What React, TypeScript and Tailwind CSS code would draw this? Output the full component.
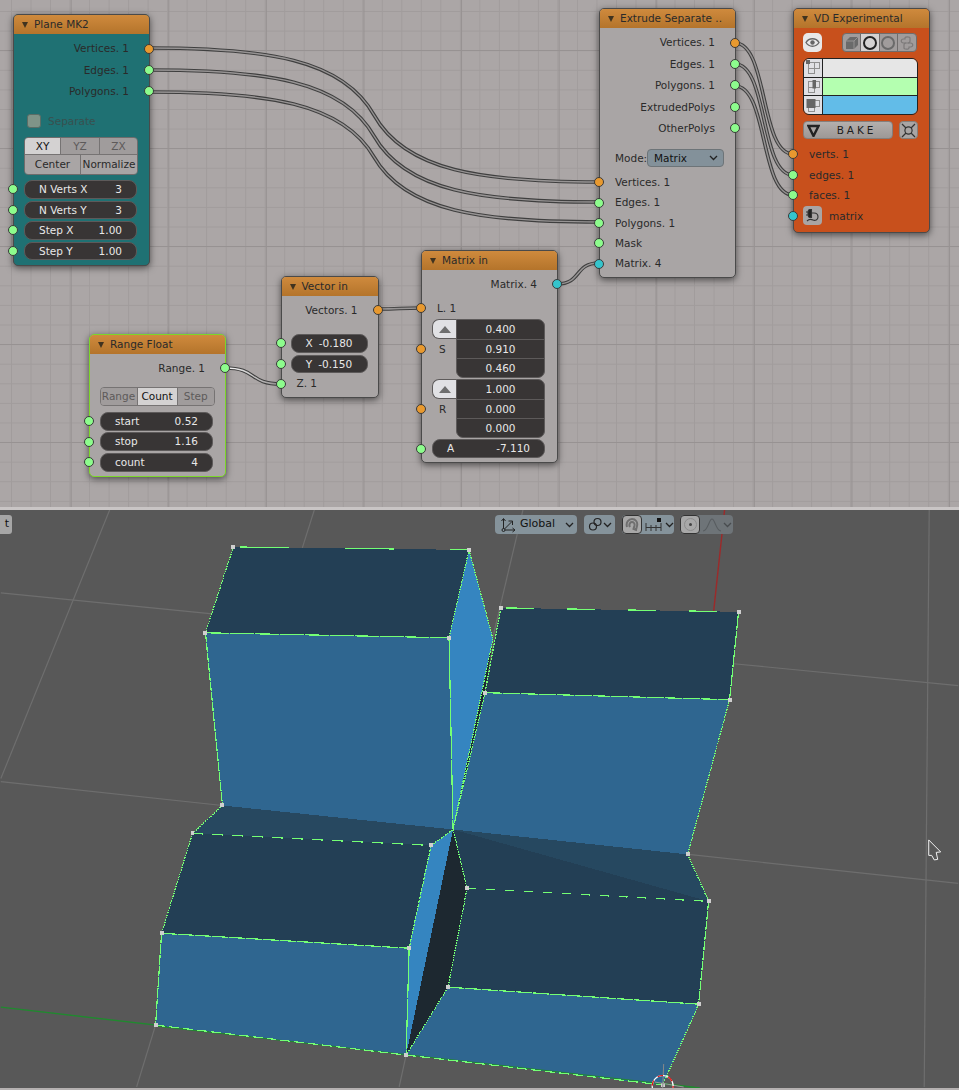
import type { ReactNode } from "react";

const ORANGE = "bg-[#e8992f]";
const GREEN = "bg-[#8dfc8d]";
const CYAN = "bg-[#35c4cc]";

function Socket({ color, side }: { color: string; side: "left" | "right" }) {
  return (
    <span
      className={`absolute top-1/2 z-10 size-[10px] -translate-y-1/2 rounded-full border border-[#3a3a3a] ${color} ${
        side === "left" ? "left-[-6px]" : "right-[-5px]"
      }`}
    />
  );
}

function Node({
  title,
  className,
  body,
  children,
}: {
  title: string;
  className: string;
  body: string;
  children: ReactNode;
}) {
  return (
    <div
      className={`absolute flex w-[137px] flex-col rounded-[5px] border border-[#4a4a4a] text-[10.5px] leading-none text-[#2a2a2a] shadow-[0_2px_7px_rgba(0,0,0,0.55)] ${body} ${className}`}
    >
      <div className="flex h-[19px] shrink-0 items-center gap-[6px] rounded-t-[4px] bg-[linear-gradient(#cf8a3d,#b4742b)] pl-[8px]">
        <span className="mt-[1px] h-0 w-0 border-x-[3.5px] border-t-[6px] border-x-transparent border-t-[#40331f]" />
        <span>{title}</span>
      </div>
      {children}
    </div>
  );
}

function Output({ label, color, h = "h-[21.4px]" }: { label: string; color: string; h?: string }) {
  return (
    <div className={`relative flex items-center justify-end pr-[20px] ${h}`}>
      <span>{label}</span>
      <Socket color={color} side="right" />
    </div>
  );
}

function Input({ label, color, h = "h-[20.4px]" }: { label: string; color: string; h?: string }) {
  return (
    <div className={`relative flex items-center pl-[15px] ${h}`}>
      <span>{label}</span>
      <Socket color={color} side="left" />
    </div>
  );
}

function Field({
  label,
  value,
  h = "h-[18.5px]",
  px = "px-[14px]",
  outer = "pl-[10px] pr-[12px]",
}: {
  label: string;
  value: string;
  h?: string;
  px?: string;
  outer?: string;
}) {
  return (
    <div className={`relative ${outer}`}>
      <div
        className={`flex items-center justify-between rounded-[8px] border border-[#5d5a5a] bg-[#383535] text-[#e8e8e8] ${h} ${px}`}
      >
        <span>{label}</span>
        <span>{value}</span>
      </div>
      <Socket color={GREEN} side="left" />
    </div>
  );
}

function Seg({ label, on, dim, w }: { label: string; on?: boolean; dim?: boolean; w: string }) {
  return (
    <div
      className={`flex h-full items-center justify-center border-r border-[#767373] last:border-r-0 ${w} ${
        on ? "bg-[#d4d2d2] text-[#111]" : dim ? "bg-[#a09c9c] text-[#5d5a5a]" : "bg-[#a9a5a5]"
      }`}
    >
      {label}
    </div>
  );
}

function ArrayField({ values, label, color }: { values: string[]; label: string; color: string }) {
  return (
    <div className="relative flex pl-[10px] pr-[12px]">
      <div className="w-[24px] shrink-0">
        <div className="flex h-[20px] items-center justify-center rounded-l-[7px] border border-r-0 border-[#5d5a5a] bg-[#e1e1e4]">
          <span className="h-0 w-0 border-x-[6px] border-b-[7px] border-x-transparent border-b-[#6e6e6e]" />
        </div>
        <div className="flex h-[20px] items-center pl-[7px]">{label}</div>
      </div>
      <div className="flex flex-1 flex-col rounded-r-[7px] rounded-bl-[7px] border border-[#5d5a5a] bg-[#383535] text-[#e8e8e8]">
        {values.map((v, i) => (
          <div
            key={i}
            className={`flex h-[19px] items-center justify-center ${i > 0 ? "border-t border-[#5d5a5a]" : ""}`}
          >
            {v}
          </div>
        ))}
      </div>
      <Socket color={color} side="left" />
    </div>
  );
}

function Wire({ d, selected }: { d: string; selected?: boolean }) {
  return (
    <g fill="none">
      <path d={d} stroke="#3f3f3f" strokeWidth="3.6" />
      <path d={d} stroke={selected ? "url(#wireSel)" : "#979494"} strokeWidth="1.4" />
    </g>
  );
}

// long links: flat at both ends, steep through the middle
function longLink(x1: number, y1: number, x2: number, y2: number) {
  const dx = x2 - x1;
  const dy = y2 - y1;
  const mx = (x1 + x2) / 2;
  const my = (y1 + y2) / 2;
  const cx = 0.07 * dx;
  const cy = 0.42 * dy;
  return `M${x1} ${y1} C${x1 + 0.26 * dx} ${y1} ${mx - cx} ${my - cy} ${mx} ${my} C${mx + cx} ${my + cy} ${x2 - 0.26 * dx} ${y2} ${x2} ${y2}`;
}

function Wires() {
  return (
    <svg className="absolute inset-0 size-full" viewBox="0 0 959 507">
      <defs>
        <linearGradient id="wireSel" x1="0" x2="1" y1="0" y2="0">
          <stop offset="0" stopColor="#ffffff" />
          <stop offset="1" stopColor="#8f8c8c" />
        </linearGradient>
      </defs>
      <Wire d={longLink(149, 48, 599, 182)} />
      <Wire d={longLink(149, 70, 599, 202)} />
      <Wire d={longLink(149, 92, 599, 222)} />
      <Wire d="M735 43 C768 43 760 154 793 154" />
      <Wire d="M735 64 C768 64 760 175 793 175" />
      <Wire d="M735 86 C768 86 760 195 793 195" />
      <Wire d="M378 309 C400 309 399 308 421 308" />
      <Wire d="M225 368 C258 368 248 384 281 384" selected />
      <Wire d="M557 284 C582 284 574 263 599 263" />
    </svg>
  );
}

function PlaneNode() {
  return (
    <Node title="Plane MK2" className="left-[13px] top-[14px] h-[252px]" body="bg-[#1f7173]">
      <div className="h-[4px]" />
      <Output label="Vertices. 1" color={ORANGE} />
      <Output label="Edges. 1" color={GREEN} />
      <Output label="Polygons. 1" color={GREEN} />
      <div className="mt-[12px] flex h-[14px] items-center gap-[7px] pl-[13px] text-[#38504f]">
        <span className="size-[14px] rounded-[3px] border border-[#5b6d66] bg-[#7f9488]" />
        <span>Separate</span>
      </div>
      <div className="ml-[10px] mr-[11px] mt-[9px] overflow-hidden rounded-[4px] border border-[#6f6c6c]">
        <div className="flex h-[17px] border-b border-[#767373]">
          <Seg label="XY" on w="w-[36px]" />
          <Seg label="YZ" dim w="w-[39px]" />
          <Seg label="ZX" dim w="flex-1" />
        </div>
        <div className="flex h-[19px]">
          <Seg label="Center" w="w-[56px]" />
          <Seg label="Normalize" w="flex-1" />
        </div>
      </div>
      <div className="mt-[5px] flex flex-col gap-[2px]">
        <Field label="N Verts X" value="3" />
        <Field label="N Verts Y" value="3" />
        <Field label="Step X" value="1.00" />
        <Field label="Step Y" value="1.00" />
      </div>
    </Node>
  );
}

function ExtrudeNode() {
  return (
    <Node title="Extrude Separate .." className="left-[599px] top-[8px] h-[270px]" body="bg-[#a9a5a5]">
      <div className="h-[4px]" />
      <Output label="Vertices. 1" color={ORANGE} />
      <Output label="Edges. 1" color={GREEN} />
      <Output label="Polygons. 1" color={GREEN} />
      <Output label="ExtrudedPolys" color={GREEN} />
      <Output label="OtherPolys" color={GREEN} />
      <div className="mt-[10px] flex h-[18px] items-center pl-[15px] pr-[11px]">
        <span className="w-[32px]">Mode:</span>
        <div className="flex h-full flex-1 items-center justify-between rounded-[4px] border border-[#6d7478] bg-[#83919a] pl-[6px] pr-[5px] text-[#111]">
          <span>Matrix</span>
          <Chevron />
        </div>
      </div>
      <div className="mt-[5px]">
        <Input label="Vertices. 1" color={ORANGE} />
        <Input label="Edges. 1" color={GREEN} />
        <Input label="Polygons. 1" color={GREEN} />
        <Input label="Mask" color={GREEN} />
        <Input label="Matrix. 4" color={CYAN} />
      </div>
    </Node>
  );
}

function Chevron({ stroke = "#222" }: { stroke?: string }) {
  return (
    <svg width="9" height="6" viewBox="0 0 9 6" className="shrink-0">
      <path d="M1 1 L4.5 4.5 L8 1" fill="none" stroke={stroke} strokeWidth="1.3" />
    </svg>
  );
}

function VertIcon({ kind }: { kind: "vert" | "edge" | "face" }) {
  return (
    <svg width="16" height="15" viewBox="0 0 16 15">
      <g fill="none" stroke="#8f8f8f" strokeWidth="1">
        <rect x="3.5" y="2.5" width="6" height="6" />
        <rect x="9.5" y="2.5" width="5" height="6" />
        <rect x="3.5" y="8.5" width="6" height="5" />
      </g>
      {kind === "vert" && <rect x="1" y="0" width="4" height="4" fill="#666" />}
      {kind === "edge" && <rect x="7.5" y="1" width="3.5" height="8.5" fill="#666" />}
      {kind === "face" && <rect x="1.5" y="1" width="9" height="9" fill="#666" />}
    </svg>
  );
}

function VdNode() {
  const cell = "flex h-full w-[18.5px] items-center justify-center border-r border-[#6f6c6c] last:border-r-0";
  const snake = "M7 7 H3.5 C0.5 7 0.5 3 3.5 3 H5 V2 C5 0.5 10 0.5 10 2 V5 C10 6.5 9 7 8 7";
  return (
    <Node title="VD Experimental" className="left-[793px] top-[8px] h-[225px]" body="bg-[#c8501c]">
      <div className="mt-[5px] flex h-[19px] justify-between pl-[9px] pr-[12px]">
        <div className="flex w-[19px] items-center justify-center rounded-[5px] bg-[#e8e8e8]">
          <svg width="15" height="11" viewBox="0 0 15 11">
            <path d="M1 5.5 C4 0.5 11 0.5 14 5.5 C11 10.5 4 10.5 1 5.5 Z" fill="none" stroke="#666" strokeWidth="1.4" />
            <circle cx="7.5" cy="5.5" r="2.2" fill="#666" />
          </svg>
        </div>
        <div className="flex w-[75px] overflow-hidden rounded-[4px] border border-[#6f6c6c] bg-[#a09c9c]">
          <div className={cell}>
            <svg width="14" height="14" viewBox="0 0 14 14">
              <path d="M1 5 L5 1 L13 1 L13 9 L9 13 L1 13 Z" fill="#6a6a6a" />
              <path d="M1 5 L9 5 L9 13 M9 5 L13 1" fill="none" stroke="#a09c9c" strokeWidth="0.8" />
            </svg>
          </div>
          <div className={`${cell} bg-[#d4d2d2]`}>
            <span className="size-[14px] rounded-full border-2 border-[#222]" />
          </div>
          <div className={cell}>
            <span className="size-[14px] rounded-full border-2 border-[#6a6a6a]" />
          </div>
          <div className={cell}>
            <svg width="14" height="14" viewBox="0 0 14 14" fill="none" stroke="#7d7a7a" strokeWidth="1.2">
              <path d={snake} />
              <path d={snake} transform="rotate(180 7 7)" />
            </svg>
          </div>
        </div>
      </div>
      <div className="ml-[9px] mr-[11px] mt-[6px] flex h-[57px] flex-col overflow-hidden rounded-[6px] border border-[#222]">
        {[
          ["vert", "bg-[#e6e6e6]"],
          ["edge", "bg-[#b4ffb0]"],
          ["face", "bg-[#62bce8]"],
        ].map(([kind, color], i) => (
          <div key={kind} className={`flex flex-1 ${i > 0 ? "border-t border-[#222]" : ""}`}>
            <div className="flex w-[19px] items-center justify-center border-r border-[#222] bg-[#e0e0e4]">
              <VertIcon kind={kind as "vert" | "edge" | "face"} />
            </div>
            <div className={`flex-1 ${color}`} />
          </div>
        ))}
      </div>
      <div className="mt-[6px] flex h-[18px] gap-[6px] pl-[9px] pr-[11px]">
        <div className="flex flex-1 items-center rounded-[4px] border border-[#857f7c] bg-[linear-gradient(#b3afad,#9d9896)] pl-[3px] text-[10.5px] tracking-[0.28em] text-[#1c1c1c]">
          <svg width="13" height="13" viewBox="0 0 13 13">
            <path d="M1.5 2 H11.5 L6.5 12 Z" fill="none" stroke="#222" strokeWidth="2.4" />
          </svg>
          <span className="flex-1 pl-[1px] text-center">BAKE</span>
        </div>
        <div className="flex w-[19px] items-center justify-center rounded-[4px] border border-[#857f7c] bg-[#a9a5a5]">
          <svg width="15" height="15" viewBox="0 0 15 15" fill="none" stroke="#333" strokeWidth="1.2">
            <circle cx="7.5" cy="7.5" r="3.6" />
            <path d="M1 1 L5 5 M14 1 L10 5 M1 14 L5 10 M14 14 L10 10" />
          </svg>
        </div>
      </div>
      <div className="mt-[5px]">
        <Input label="verts. 1" color={ORANGE} h="h-[20.5px]" />
        <Input label="edges. 1" color={GREEN} h="h-[20.5px]" />
        <Input label="faces. 1" color={GREEN} h="h-[20.5px]" />
        <div className="relative flex h-[20.5px] items-center gap-[7px] pl-[9px]">
          <span className="flex size-[19px] items-center justify-center rounded-[4px] bg-[#a9a5a5]">
            <svg width="15" height="15" viewBox="0 0 15 15" fill="none" stroke="#333" strokeWidth="1.1">
              <path d="M1 4 H3 M1 7 H3 M6.5 1.5 V9.5 H5 C3.5 9.5 3 8 3 5.5 C3 3 3.5 1.5 5 1.5 Z" fill="#222" />
              <path d="M6.5 5 H9 C12 5 13 7 13 9 C13 12 10 13 8 12 C6 11 4 11 2 13" />
            </svg>
          </span>
          <span>matrix</span>
          <Socket color={CYAN} side="left" />
        </div>
      </div>
    </Node>
  );
}

function VectorNode() {
  return (
    <Node title="Vector in" className="left-[280.5px] top-[276px] h-[122px] !w-[98px]" body="bg-[#a9a5a5]">
      <div className="h-[4px]" />
      <Output label="Vectors. 1" color={ORANGE} h="h-[20px]" />
      <div className="mt-[14px] flex flex-col gap-[2px]">
        <Field label="X" value="-0.180" px="justify-center !gap-[6px]" outer="pl-[9px] pr-[10px]" />
        <Field label="Y" value="-0.150" px="justify-center !gap-[6px]" outer="pl-[9px] pr-[10px]" />
      </div>
      <Input label="Z. 1" color={GREEN} h="h-[21px]" />
    </Node>
  );
}

function RangeNode() {
  return (
    <Node
      title="Range Float"
      className="left-[89px] top-[334px] h-[143px] !border-[#7cd62a]"
      body="bg-[#a9a5a5]"
    >
      <div className="h-[4px]" />
      <Output label="Range. 1" color={GREEN} h="h-[20px]" />
      <div className="ml-[9.5px] mr-[10px] mt-[9px] flex h-[19px] overflow-hidden rounded-[4px] border border-[#767373]">
        <Seg label="Range" dim w="w-[37px]" />
        <Seg label="Count" on w="w-[40px]" />
        <Seg label="Step" dim w="flex-1" />
      </div>
      <div className="mt-[5.5px] flex flex-col gap-[1.5px]">
        <Field label="start" value="0.52" h="h-[19px]" />
        <Field label="stop" value="1.16" h="h-[19px]" />
        <Field label="count" value="4" h="h-[19px]" />
      </div>
    </Node>
  );
}

function MatrixNode() {
  return (
    <Node title="Matrix in" className="left-[421px] top-[250px] h-[213px]" body="bg-[#a9a5a5]">
      <div className="h-[4px]" />
      <Output label="Matrix. 4" color={CYAN} h="h-[20px]" />
      <Input label="L. 1" color={ORANGE} h="h-[28px]" />
      <div className="-mt-[3px]">
        <ArrayField values={["0.400", "0.910", "0.460"]} label="S" color={ORANGE} />
      </div>
      <div className="mt-[1px]">
        <ArrayField values={["1.000", "0.000", "0.000"]} label="R" color={ORANGE} />
      </div>
      <div className="mt-[1px]">
        <Field label="A" value="-7.110" h="h-[19px]" />
      </div>
    </Node>
  );
}

type Pt = [number, number];

const A: Pt = [233, 546];
const B: Pt = [469, 549];
const C: Pt = [449, 637];
const D: Pt = [205, 632];
const E: Pt = [222, 805];
const T: Pt = [453, 829];
const SIDE: Pt = [493, 638];
const F: Pt = [501, 607];
const G: Pt = [739, 611];
const H: Pt = [730, 699];
const I: Pt = [485, 692];
const J: Pt = [688, 854];
const L: Pt = [192, 833];
const M: Pt = [431, 845];
const N: Pt = [409, 948];
const O: Pt = [161, 933];
const P: Pt = [406, 1055];
const Q: Pt = [155, 1025];
const S: Pt = [467, 888];
const R: Pt = [709, 901];
const U: Pt = [699, 1004];
const W: Pt = [448, 987];
const X: Pt = [663, 1085];

const faces: [Pt[], string][] = [
  [[A, B, C, D], "#233f55"],
  [[D, C, T, E], "#2f6690"],
  [[B, SIDE, T, C], "#3585c0"],
  [[SIDE, I, T], "#1d2a33"],
  [[F, G, H, I], "#233f55"],
  [[I, H, J, T], "#2f6690"],
  [[E, T, M, L], "#274860"],
  [[L, M, N, O], "#233f55"],
  [[O, N, P, Q], "#2f6690"],
  [[M, T, P, N], "#3585c0"],
  [[T, S, W, P], "#1d2830"],
  [[T, J, R], "#264860"],
  [[T, R, S], "#233f55"],
  [[S, R, U, W], "#233f55"],
  [[W, U, X, P], "#2f6690"],
];

const DOT = "1.5 1";
const edges: [Pt, Pt, string][] = [
  [A, B, "0 7 49 49"],
  [A, D, DOT],
  [D, C, "24 1"],
  [D, E, "9 1"],
  [B, C, DOT],
  [B, SIDE, DOT],
  [C, T, "60 1"],
  [F, I, "2 1"],
  [I, T, DOT],
  [SIDE, T, DOT],
  [F, G, "0 5 28 28"],
  [G, H, "18 1"],
  [I, H, "17 1"],
  [H, J, DOT],
  [J, R, DOT],
  [R, U, "9 1"],
  [E, L, DOT],
  [L, M, "11 9"],
  [M, T, DOT],
  [L, O, DOT],
  [O, N, "16 1"],
  [O, Q, "10 1"],
  [N, P, "50 1"],
  [M, N, "3 1"],
  [Q, P, "10 4"],
  [T, S, DOT],
  [S, W, DOT],
  [S, R, "9 10"],
  [W, U, "16 1"],
  [U, X, DOT],
  [P, X, "10 4"],
  [P, W, DOT],
];

const gridLines: [number, number, number, number][] = [
  [109, 509, 0, 778],
  [0, 592, 212, 613],
  [0, 781, 222, 805],
  [314, 509, 302, 547],
  [523, 509, 493, 636],
  [734, 663, 959, 685],
  [689, 854, 959, 883],
  [930, 509, 925, 1087],
  [155, 1025, 136, 1087],
  [406, 1055, 399, 1087],
];

function Mesh() {
  return (
    <svg className="absolute inset-0 size-full" viewBox="0 509 959 579">
      {gridLines.map(([x1, y1, x2, y2], i) => (
        <line key={i} x1={x1} y1={y1} x2={x2} y2={y2} stroke="#6e6e6e" strokeWidth="1.2" />
      ))}
      <line x1="725" y1="509" x2="714" y2="611" stroke="#9c2a2a" strokeWidth="1.4" />
      <line x1="0" y1="1007" x2="700" y2="1088" stroke="#1f8a2e" strokeWidth="1.4" />
      <g shapeRendering="crispEdges">
        {faces.map(([pts, fill], i) => (
          <polygon key={i} points={pts.map((p) => p.join(",")).join(" ")} fill={fill} />
        ))}
      </g>
      <line x1="155" y1="1026" x2="700" y2="1088" stroke="#1f8a2e" strokeWidth="1" />
      <g shapeRendering="crispEdges">
        {edges.map(([a, b, dash], i) => (
          <line key={i} x1={a[0]} y1={a[1]} x2={b[0]} y2={b[1]} stroke="#74ff74" strokeWidth="1.2" strokeDasharray={dash} />
        ))}
        {[A, B, C, D, E, F, G, H, I, J, L, M, N, O, P, Q, S, R, U, W, X].map((p, i) => (
          <rect key={i} x={p[0] - 2} y={p[1] - 2} width="4" height="4" fill="#cfcfcf" />
        ))}
      </g>
      <line x1="664" y1="1064" x2="663" y2="1088" stroke="#8a8a8a" strokeWidth="1" />
      <line x1="655" y1="1082" x2="684" y2="1087" stroke="#9a9a9a" strokeWidth="1" />
      <circle cx="663" cy="1086" r="10.5" fill="none" stroke="#ffffff" strokeWidth="1.2" />
      <circle cx="663" cy="1086" r="10.5" fill="none" stroke="#e01010" strokeWidth="1.2" strokeDasharray="5.5 5.5" />
      <path
        d="M929.5 839.5 L941.5 851.5 L937 852 L938.5 859 L935 859.5 L932.5 855 L929.5 855 Z"
        fill="#585858"
        stroke="#f2f2f2"
        strokeWidth="1"
      />
    </svg>
  );
}

function Toolbar() {
  const btn = "flex h-[19px] items-center rounded-[4px] bg-[#85939b]";
  return (
    <div className="absolute left-[495px] top-[5px] flex text-[10.6px] text-[#111]">
      <div className={`${btn} w-[82px] pl-[5px] pr-[3px]`}>
        <svg width="16" height="16" viewBox="0 0 16 16" fill="none" stroke="#222" strokeWidth="1">
          <path d="M3.5 14 V2 M1.5 4 L3.5 1.5 L5.5 4 M3.5 13 H14.5 M12.5 11 L15 13 L12.5 15 M3.5 13 L12 4.5 M8.5 4 H12.5 V8" />
          <circle cx="3.5" cy="13" r="1.5" fill="#85939b" />
        </svg>
        <span className="ml-[4px] flex-1 text-[11px]">Global</span>
        <Chevron />
      </div>
      <div className={`${btn} ml-[7px] w-[31px] justify-between pl-[4px] pr-[3px]`}>
        <svg width="15" height="15" viewBox="0 0 15 15" fill="none" stroke="#222" strokeWidth="1.2">
          <circle cx="5" cy="9.5" r="3.5" />
          <circle cx="9.5" cy="5" r="3.5" />
        </svg>
        <Chevron />
      </div>
      <div className={`${btn} ml-[7px] w-[52px]`}>
        <span className="flex h-full w-[20px] items-center justify-center rounded-[4px] border border-[#333] bg-[#a8a8a8]">
          <svg width="14" height="14" viewBox="0 0 14 14" fill="none" stroke="#6f6f6f" strokeWidth="2">
            <path d="M2 9 C0.5 4 4 1 7 1 C10.5 1 13 4 12 8 L11 12 L8.5 11 L9.5 7.5 C10 5.5 8.5 4 7 4 C5.5 4 4 5.5 4.5 8 L5 9" />
          </svg>
        </span>
        <svg width="19" height="14" viewBox="0 0 19 14" className="ml-[3px]" fill="none" stroke="#333" strokeWidth="1">
          <path d="M1 5 V13 M6 7 V13 M11 7 V13 M16 5 V13 M1 9.5 H16" />
          <rect x="12" y="0" width="4" height="4" fill="#111" stroke="none" />
        </svg>
        <span className="ml-[1px]">
          <Chevron />
        </span>
      </div>
      <div className="ml-[6px] flex h-[19px] w-[53px] items-center rounded-[4px] bg-[#6e7478]">
        <span className="flex h-full w-[20px] items-center justify-center rounded-[4px] border border-[#333] bg-[#a8a8a8]">
          <span className="flex size-[13px] items-center justify-center rounded-full border border-[#8c8c8c]">
            <span className="size-[3px] rounded-full bg-[#444]" />
          </span>
        </span>
        <svg width="20" height="15" viewBox="0 0 20 15" className="ml-[2px]" fill="none" stroke="#585d60" strokeWidth="1.2">
          <path d="M1 14 C6 14 7 2 10 2 C13 2 14 14 19 14" />
        </svg>
        <span className="ml-[1px]">
          <Chevron stroke="#484c4f" />
        </span>
      </div>
    </div>
  );
}

export default function App() {
  return (
    <div className="flex h-[1090px] w-[959px] flex-col overflow-hidden bg-[#aaa5a5] font-['DejaVu_Sans',sans-serif]">
      <section className="relative h-[507px] shrink-0 bg-[#aba6a6] [background-image:linear-gradient(#979292_1px,transparent_1px),linear-gradient(90deg,#979292_1px,transparent_1px),linear-gradient(#a19c9c_1px,transparent_1px),linear-gradient(90deg,#a19c9c_1px,transparent_1px)] [background-position:0_50px,70.7px_0,0_11px,11px_0] [background-size:98px_98px,97.6px_97.6px,19.6px_19.6px,19.52px_19.52px]">
        <Wires />
        <PlaneNode />
        <ExtrudeNode />
        <VdNode />
        <RangeNode />
        <VectorNode />
        <MatrixNode />
      </section>
      <div className="h-[3px] shrink-0 bg-[#c9c5c5]" />
      <section className="relative flex-1 overflow-hidden bg-[#585858]">
        <Mesh />
        <div className="absolute left-0 top-[5px] flex h-[19px] w-[12px] items-center justify-end rounded-r-[3px] bg-[#a6a6a6] pr-[3px] text-[11px] text-[#111]">
          t
        </div>
        <Toolbar />
      </section>
      <div className="h-[2px] shrink-0 bg-[#b5b1b1]" />
    </div>
  );
}
